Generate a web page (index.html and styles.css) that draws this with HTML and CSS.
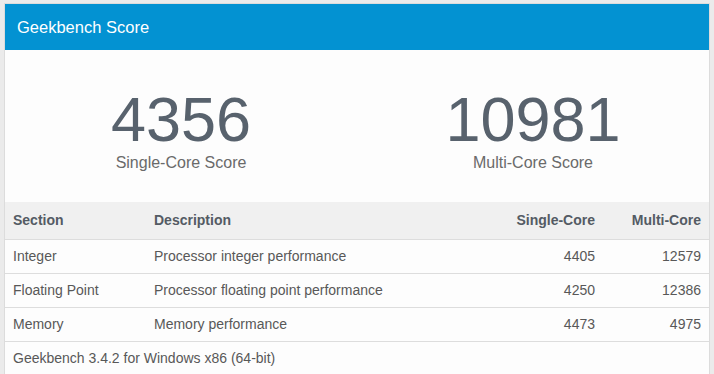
FILE: index.html
```html
<!DOCTYPE html>
<html lang="en">
<head>
    <meta charset="UTF-8">
    <meta name="viewport" content="width=device-width, initial-scale=1.0">
    <title>Geekbench Score</title>
    <link rel="stylesheet" href="styles.css">
</head>
<body>
    <div class="panel">
        <div class="panel-heading">Geekbench Score</div>
        <div class="scores">
            <div class="score">
                <div class="score-value">4356</div>
                <div class="score-label">Single-Core Score</div>
            </div>
            <div class="score">
                <div class="score-value">10981</div>
                <div class="score-label">Multi-Core Score</div>
            </div>
        </div>
        <table class="score-table">
            <colgroup>
                <col class="col-section">
                <col>
                <col class="col-single">
                <col class="col-multi">
            </colgroup>
            <thead>
                <tr>
                    <th>Section</th>
                    <th>Description</th>
                    <th class="num">Single-Core</th>
                    <th class="num">Multi-Core</th>
                </tr>
            </thead>
            <tbody>
                <tr>
                    <td>Integer</td>
                    <td>Processor integer performance</td>
                    <td class="num">4405</td>
                    <td class="num">12579</td>
                </tr>
                <tr>
                    <td>Floating Point</td>
                    <td>Processor floating point performance</td>
                    <td class="num">4250</td>
                    <td class="num">12386</td>
                </tr>
                <tr>
                    <td>Memory</td>
                    <td>Memory performance</td>
                    <td class="num">4473</td>
                    <td class="num">4975</td>
                </tr>
                <tr>
                    <td colspan="4">Geekbench 3.4.2 for Windows x86 (64-bit)</td>
                </tr>
            </tbody>
        </table>
    </div>
</body>
</html>
```

FILE: styles.css
```css
body {
    margin: 0;
    padding: 3px 4px 0;
    background-color: #ebebeb;
    font-family: "Liberation Sans", Arial, sans-serif;
}
.panel {
    background-color: #fdfdfd;
    border: 1px solid #dcdcdc;
    border-bottom: none;
}
.panel-heading {
    height: 46px;
    line-height: 46px;
    padding-left: 12px;
    background-color: #0392d2;
    color: #fff;
    font-size: 16.5px;
}
.scores {
    display: grid;
    grid-template-columns: 1fr 1fr;
    padding: 35px 0 31px;
    text-align: center;
}
.score-value {
    font-size: 63px;
    line-height: 68px;
    color: #58626d;
}
.score-label {
    margin-top: 1px;
    font-size: 16px;
    line-height: 17px;
    color: #6a6a6a;
}
.score-table {
    width: 100%;
    border-collapse: collapse;
    font-size: 14px;
    line-height: 17px;
    color: #585858;
}
.col-section {
    width: 141px;
}
.col-single {
    width: 120px;
}
.col-multi {
    width: 106px;
}
.score-table th {
    padding: 10px 8px;
    background-color: #f0f0f0;
    color: #545b64;
    text-align: left;
    border-bottom: 1px solid #dddddd;
}
.score-table td {
    padding: 8px;
    border-bottom: 1px solid #dddddd;
}
.score-table .num {
    text-align: right;
}
```
